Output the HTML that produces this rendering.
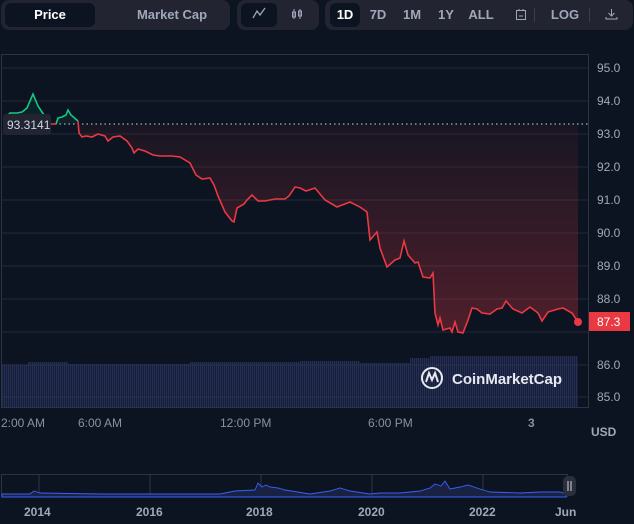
<!DOCTYPE html><html><head><style>
body{margin:0;width:634px;height:524px;background:#0d1421;font-family:"Liberation Sans",sans-serif;overflow:hidden;position:relative}
.g{position:absolute;background:#222531;border-radius:8px;height:30px;top:0}
.b{position:absolute;color:#a1a7bb;font-size:13px;font-weight:bold;top:0;height:30px;line-height:30px;text-align:center}
.sel{background:#0d1421;border-radius:6px;color:#fff;top:3px;height:24px;line-height:24px}
</style></head><body>
<div class="g" style="left:1px;width:229px"></div>
<div class="b sel" style="left:5px;width:90px">Price</div>
<div class="b" style="left:122px;width:100px">Market Cap</div>
<div class="g" style="left:237px;width:82px"></div>
<div class="b sel" style="left:241px;width:36px"><svg width="14" height="12" viewBox="0 0 14 12"><path d="M1 11L5 4L8 8L13 1" stroke="#a1a7bb" fill="none" stroke-width="1.3"/></svg></div>
<div class="b" style="left:283px;width:28px;line-height:32px"><svg width="12" height="12" viewBox="0 0 12 12"><path d="M3 1V11M9 1V11" stroke="#a1a7bb"/><rect x="1.5" y="4" width="3" height="5" fill="none" stroke="#a1a7bb"/><rect x="7.5" y="3" width="3" height="5" fill="none" stroke="#a1a7bb"/></svg></div>
<div class="g" style="left:325px;width:308px"></div>
<div class="b sel" style="left:330px;width:30px">1D</div>
<div class="b" style="left:366px;width:24px">7D</div>
<div class="b" style="left:400px;width:24px">1M</div>
<div class="b" style="left:434px;width:24px">1Y</div>
<div class="b" style="left:466px;width:30px">ALL</div>
<div class="b" style="left:510px;width:22px;line-height:32px"><svg width="12" height="12"><rect x="1.5" y="2.5" width="9" height="9" fill="none" stroke="#a1a7bb"/><path d="M4 1V3M8 1V3M4 8H8" stroke="#a1a7bb"/></svg></div>
<div style="position:absolute;left:534px;top:8px;width:1px;height:14px;background:#3a3f4e"></div>
<div class="b" style="left:550px;width:30px">LOG</div>
<div style="position:absolute;left:589px;top:8px;width:1px;height:14px;background:#3a3f4e"></div>
<div class="b" style="left:600px;width:22px;line-height:32px"><svg width="13" height="12"><path d="M6.5 1V8M3.5 5L6.5 8L9.5 5M1 9V11H12V9" stroke="#a1a7bb" fill="none"/></svg></div>
<svg width="634" height="524" style="position:absolute;left:0;top:0" font-family="Liberation Sans" >
<defs><linearGradient id="rf" x1="0" y1="0" x2="0" y2="1"><stop offset="0" stop-color="#ea3943" stop-opacity="0.05"/><stop offset="1" stop-color="#ea3943" stop-opacity="0.3"/></linearGradient>
<pattern id="vb" width="2" height="10" patternUnits="userSpaceOnUse"><rect width="2" height="10" fill="#161d36"/><rect width="1" height="10" fill="#252e55"/></pattern></defs>
<rect x="1.5" y="54.5" width="587" height="353" fill="none" stroke="#2e3342"/>
<g stroke="#222737">
<line x1="2" x2="588" y1="68" y2="68"/><line x1="2" x2="588" y1="101" y2="101"/><line x1="2" x2="588" y1="134" y2="134"/><line x1="2" x2="588" y1="167" y2="167"/><line x1="2" x2="588" y1="200" y2="200"/><line x1="2" x2="588" y1="233" y2="233"/><line x1="2" x2="588" y1="266" y2="266"/><line x1="2" x2="588" y1="299" y2="299"/><line x1="2" x2="588" y1="332" y2="332"/><line x1="2" x2="588" y1="365" y2="365"/><line x1="2" x2="588" y1="397" y2="397"/></g>
<path d="M2 365H28V362H68V364H190V362H300V361H360V363H410V358H430V356H578V407H2Z" fill="url(#vb)"/>
<g stroke="#2a3150"><line x1="2" x2="578" y1="365" y2="365"/><line x1="2" x2="578" y1="397" y2="397"/></g>
<g fill="#a1a7bb" font-size="12"><text x="597" y="72">95.0</text><text x="597" y="105">94.0</text><text x="597" y="138">93.0</text><text x="597" y="171">92.0</text><text x="597" y="204">91.0</text><text x="597" y="237">90.0</text><text x="597" y="270">89.0</text><text x="597" y="303">88.0</text><text x="597" y="369">86.0</text><text x="597" y="401">85.0</text></g>
<g fill="#8a90a3" font-size="12"><text x="1" y="427">2:00 AM</text><text x="78" y="427">6:00 AM</text><text x="220" y="427">12:00 PM</text><text x="368" y="427">6:00 PM</text><text x="528" y="427" font-weight="bold">3</text></g>
<text x="591" y="436" fill="#a1a7bb" font-size="12" font-weight="bold">USD</text>
<path d="M5 124L5 118L10 113L17 113L22 112L27 108L33 94L38 106L42 112L46 118L50 124Z M56 124L58 118L62 117L66 115L68 110L71 115L78 121L78 124Z" fill="#16c784" fill-opacity="0.08"/>
<path d="M79 124L79 133L82 137L86 136L92 137L98 134L105 136L108 141L113 137L120 136L127 141L132 148L134 153L138 149L145 151L153 155L160 156L172 156L180 157L190 163L196 175L202 179L210 178L214 185L218 196L225 212L232 221L234 222L237 208L244 204L247 200L252 195L258 201L265 201L275 199L285 199L289 196L295 187L300 188L306 191L315 188L325 200L337 207L350 202L360 207L367 212L370 240L377 232L380 248L387 267L395 260L400 258L404 241L408 255L415 263L418 262L423 277L430 278L433 273L435 313L438 325L440 318L443 330L450 328L452 332L455 322L458 332L463 333L468 320L472 308L477 309L482 313L490 314L497 309L502 308L506 301L513 309L522 313L530 307L538 313L542 321L548 312L558 309L563 308L572 313L578 322L578 124Z" fill="url(#rf)"/>
<line x1="55" x2="588" y1="124" y2="124" stroke="#cfd6e4" stroke-dasharray="1.5 3"/>
<path d="M5 118L10 113L17 113L22 112L27 108L33 94L38 106L42 112L46 118L50 124M56 124L58 118L62 117L66 115L68 110L71 115L78 121" stroke="#16c784" fill="none" stroke-width="1.6"/>
<path d="M50 124H56M78 121L79 133L82 137L86 136L92 137L98 134L105 136L108 141L113 137L120 136L127 141L132 148L134 153L138 149L145 151L153 155L160 156L172 156L180 157L190 163L196 175L202 179L210 178L214 185L218 196L225 212L232 221L234 222L237 208L244 204L247 200L252 195L258 201L265 201L275 199L285 199L289 196L295 187L300 188L306 191L315 188L325 200L337 207L350 202L360 207L367 212L370 240L377 232L380 248L387 267L395 260L400 258L404 241L408 255L415 263L418 262L423 277L430 278L433 273L435 313L438 325L440 318L443 330L450 328L452 332L455 322L458 332L463 333L468 320L472 308L477 309L482 313L490 314L497 309L502 308L506 301L513 309L522 313L530 307L538 313L542 321L548 312L558 309L563 308L572 313L578 322" stroke="#ea3943" fill="none" stroke-width="1.6"/>
<circle cx="578" cy="322" r="4" fill="#ea3943"/>
<rect x="589" y="312" width="41" height="19" fill="#ea3943"/><text x="597" y="326" fill="#fff" font-size="12">87.3</text>
<rect x="3" y="114" width="48" height="21" rx="3" fill="#222531"/><text x="7" y="129" fill="#cfd6e4" font-size="12">93.3141</text>
<circle cx="432" cy="378" r="10" fill="none" stroke="#e8eaf0" stroke-width="2"/><path d="M426 382L429 373L432 380L435 373L438 382" fill="none" stroke="#e8eaf0" stroke-width="2"/>
<text x="452" y="384" fill="#e8eaf0" font-size="15" font-weight="bold">CoinMarketCap</text>
<rect x="1.5" y="474.5" width="566" height="22" fill="none" stroke="#2e3342"/>
<g stroke="#2e3342"><line x1="39" x2="39" y1="475" y2="497"/><line x1="150" x2="150" y1="475" y2="497"/><line x1="261" x2="261" y1="475" y2="497"/><line x1="372" x2="372" y1="475" y2="497"/><line x1="483" x2="483" y1="475" y2="497"/></g>
<path d="M2 494L30 494L34 491L40 493L100 494L220 494L235 491L255 490L258 483L262 487L266 485L270 487L278 488L285 490L310 494L330 491L340 488L350 491L370 494L380 493L400 493L420 491L430 488L435 484L441 486L445 481L450 489L460 487L468 485L480 489L490 492L520 493L540 492L560 492L566 494V497H2Z" fill="#1a2244" stroke="#3861fb" stroke-width="0.9"/>
<rect x="563" y="476" width="13" height="20" rx="5" fill="#2b2f3c"/><path d="M568 481V491M571 481V491" stroke="#cfd6e4"/>
<g fill="#a1a7bb" font-size="12" font-weight="bold"><text x="24" y="516">2014</text><text x="136" y="516">2016</text><text x="246" y="516">2018</text><text x="358" y="516">2020</text><text x="469" y="516">2022</text><text x="555" y="516">Jun</text></g>
</svg>
</body></html>
